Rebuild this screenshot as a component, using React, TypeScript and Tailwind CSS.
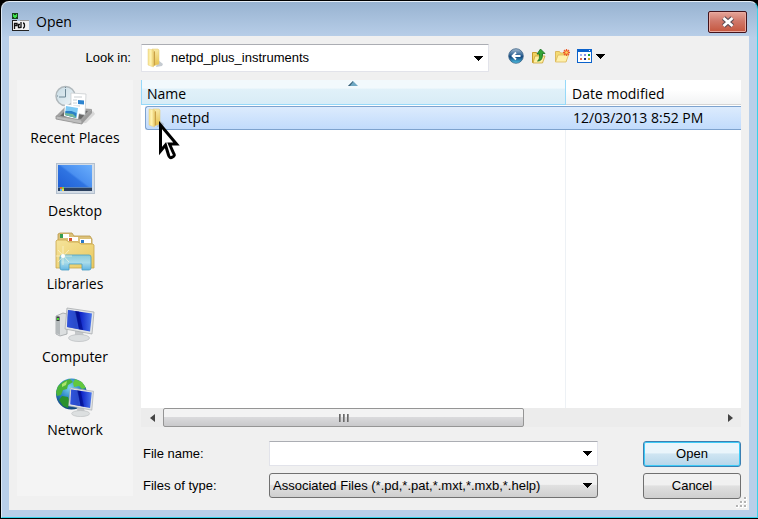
import type { ReactNode } from 'react';

function FolderIcon() {
  return (
    <svg width="20" height="20" viewBox="0 0 20 20" aria-hidden="true">
      <defs>
        <linearGradient id="folderFront" x1="0" x2="1" y1="0" y2="0">
          <stop offset="0" stopColor="#f6e28e" />
          <stop offset=".5" stopColor="#fff3b4" />
          <stop offset="1" stopColor="#e9cb66" />
        </linearGradient>
        <linearGradient id="folderBack" x1="0" x2="0" y1="0" y2="1">
          <stop offset="0" stopColor="#f8e9a6" />
          <stop offset="1" stopColor="#e6c04d" />
        </linearGradient>
      </defs>
      <path d="M13 12l5 4-1 2-6 1z" fill="#9fa8b2" opacity=".6" />
      <path d="M7 1h6l1 1v14l-6 2z" fill="url(#folderBack)" stroke="#e2c873" strokeWidth=".5" />
      <path d="M8.500 4L10 3v14l-1.500 1z" fill="#c9a046" />
      <path d="M3 1l5.500 1v17L3 17z" fill="url(#folderFront)" stroke="#e6cd80" strokeWidth=".5" />
    </svg>
  );
}

function AppIcon() {
  return (
    <svg width="18" height="19" viewBox="0 0 18 19" aria-hidden="true">
      <path d="M0 0h6v6H0z" fill="#17451c" />
      <path d="M1 1h1v1h2V1h1v3H4v1H2V4H1z" fill="#3ce04b" />
      <path d="M0 8h17v10H0z" fill="#f2f2f2" />
      <path d="M0 7h5v1H0zM0 17h17v1H0zM0 8h1v9H0z" fill="#222" />
      <path d="M8 7h9v1H8z" fill="#999" />
      <path d="M2.500 10v6M2 10.500h3v2H2M8 11.500H6.500v3H8.500M9 9v6M11 10c2 0 2 5 0 5" fill="none" stroke="#111" strokeWidth="1.300" />
    </svg>
  );
}

function RecentIcon() {
  return (
    <svg width="40" height="40" viewBox="0 0 40 40" aria-hidden="true">
      <defs>
        <linearGradient id="clockFace" x1="0" y1="0" x2="1" y2="1">
          <stop offset="0" stopColor="#c7dbe4" />
          <stop offset="1" stopColor="#eef4f7" />
        </linearGradient>
      </defs>
      <path d="M30 32l8-6 2 3-9 9-15 1z" fill="#bbb" opacity=".5" />
      <circle cx="10.500" cy="11" r="9.500" fill="url(#clockFace)" stroke="#b0b8bc" strokeWidth="1.500" />
      <path d="M10.500 4v8H4" fill="none" stroke="#6d8795" strokeWidth="1" />
      <path d="M10.500 2v1M2 11h1M10.500 19v1M18 11h1" stroke="#6d8795" />
      <path d="M1 31l9-9 27 2-9 11z" fill="#a2a2a2" />
      <path d="M5 31l7-7 21 2-7 8z" fill="#6a6a6a" />
      <path d="M16 8l15 1-1 21-14-3z" fill="#fff" stroke="#c4c8cc" strokeWidth=".7" />
      <path d="M19 12h8M18 15h4M18 18h4M18 21h7" stroke="#c9ced2" />
      <path d="M23 15l6 .5v4L23 19z" fill="#2d83cf" />
      <path d="M10 19l15 3-2 13-14-4z" fill="#fff" />
      <path d="M11 21l12 2-1.500 10L10 30z" fill="#7cc8f3" />
      <path d="M10.500 26l6 0 5 2-.5 5L10 30z" fill="#2a80c6" />
      <path d="M10 28l8 1 3 3v1l-11-3z" fill="#75b99a" />
      <path d="M1 31l26 4v4L1 34z" fill="#bdbdbd" stroke="#8c8c8c" strokeWidth=".8" />
      <path d="M27 35l10-11v4l-10 11z" fill="#9b9b9b" />
    </svg>
  );
}

function DesktopIcon() {
  return (
    <svg width="40" height="40" viewBox="0 0 40 40" aria-hidden="true">
      <defs>
        <linearGradient id="wallpaper" x1="0" y1="1" x2="1" y2="0">
          <stop offset="0" stopColor="#1d5bd2" />
          <stop offset=".5" stopColor="#2f74e2" />
          <stop offset=".55" stopColor="#4a8ff0" />
          <stop offset="1" stopColor="#6aaefc" />
        </linearGradient>
      </defs>
      <path d="M1 5h39v31H1z" fill="#b4c0ce" />
      <path d="M2 6h37v29H2z" fill="#d3dce6" />
      <path d="M3 7h34v26H3z" fill="url(#wallpaper)" />
      <path d="M3 30h34v3H3z" fill="#2b405f" />
      <path d="M3 29h34v1H3z" fill="#5d85b8" />
      <path d="M5 29h2v2H5z" fill="#e96a36" />
      <path d="M7 29h2v2H7z" fill="#84cf46" />
      <path d="M5 31h2v2H5z" fill="#55b6f2" />
      <path d="M7 31h2v2H7z" fill="#f7d443" />
    </svg>
  );
}

function LibrariesIcon() {
  return (
    <svg width="40" height="40" viewBox="0 0 40 40" aria-hidden="true">
      <defs>
        <linearGradient id="libraryBody" x1="0" y1="0" x2="1" y2="1">
          <stop offset="0" stopColor="#f5e39b" />
          <stop offset="1" stopColor="#e9c95f" />
        </linearGradient>
        <linearGradient id="libraryStand" x1="0" y1="0" x2="0" y2="1">
          <stop offset="0" stopColor="#8ccbd8" />
          <stop offset=".5" stopColor="#a9dcea" />
          <stop offset="1" stopColor="#62b5e2" />
        </linearGradient>
      </defs>
      <path d="M3 12V3l2-1h12l2 3h16l2 3v12z" fill="#dcc27a" stroke="#b99848" strokeWidth=".8" />
      <path d="M5 3h9v4H5z" fill="#fff" />
      <path d="M5 3h3v4H5z" fill="#369d50" />
      <path d="M13 6h10v4H13z" fill="#fff" />
      <path d="M14 7h3v3h-3z" fill="#d65031" />
      <path d="M25 8h11v4H25z" fill="#fff" />
      <path d="M26 9h3v3h-3z" fill="#2878c8" />
      <path d="M1 10l1-1h9l3 2h9l3 2h12l1 1v23H1z" fill="url(#libraryBody)" stroke="#c9a64b" strokeWidth=".8" />
      <path d="M5 37V26q0-2 2-2h27q2 0 2 2v11q0 2-2 2h-7v-6H14v6H7q-2 0-2-2z" fill="url(#libraryStand)" stroke="#4aa0c4" strokeWidth=".8" />
      <path d="M8 15v19M1 25h16M3 19l11 12M3 31l11-12" stroke="#fffce0" strokeWidth=".6" />
      <circle cx="8" cy="25" r="2" fill="#fff" />
    </svg>
  );
}

function Monitor() {
  return (
    <>
      <defs>
        <linearGradient id="monitorGlass" x1="0" y1="0" x2="1" y2="0">
          <stop offset="0" stopColor="#0f22c8" />
          <stop offset=".35" stopColor="#0410a0" />
          <stop offset=".5" stopColor="#0a1fc4" />
          <stop offset="1" stopColor="#4d79ee" />
        </linearGradient>
      </defs>
      <path d="M20 26l8 2 1 5h-9z" fill="#c5c8ca" />
      <ellipse cx="24" cy="34" rx="10.500" ry="3.500" fill="#dcdfe0" stroke="#b9bcbe" strokeWidth=".7" />
      <path d="M12 4l27 4-2 22-27-5z" fill="#e1e4e6" stroke="#a9adb0" strokeWidth=".8" />
      <path d="M13 6l24 3.500-2 18L12 23z" fill="url(#monitorGlass)" />
      <path d="M13 6l8 1.200 3 18L12 23z" fill="#4f86f2" opacity=".5" />
      <path d="M20 7l4 .6 4 18.400-4-.8z" fill="#020c80" opacity=".6" />
    </>
  );
}

function ComputerIcon() {
  return (
    <svg width="40" height="40" viewBox="0 0 40 40" aria-hidden="true">
      <path d="M1 12l7-3 4 1v20l-7 2-4-2z" fill="#dcdfe0" stroke="#9da1a3" strokeWidth=".8" />
      <path d="M1 12l4 1v18l-4-2z" fill="#b4b9bb" />
      <path d="M1.500 12.500h3V17h-3z" fill="#353a3c" />
      <path d="M2 14h2v2H2z" fill="#49d82e" />
      <Monitor />
    </svg>
  );
}

function NetworkIcon() {
  return (
    <svg width="40" height="40" viewBox="0 0 40 40" aria-hidden="true">
      <defs>
        <radialGradient id="ocean" cx=".45" cy=".3" r=".7">
          <stop offset="0" stopColor="#7fd6f2" />
          <stop offset=".5" stopColor="#2b83c6" />
          <stop offset="1" stopColor="#104378" />
        </radialGradient>
      </defs>
      <circle cx="16.500" cy="17" r="15.500" fill="url(#ocean)" />
      <path d="M3 9l6-5 6-2 3 3-5 3-1 4-4 1-2 5-4 1-1-4z" fill="#4bb43a" />
      <path d="M20 2l7 3 4 6-4 1-3-3-5 1-1-4z" fill="#62c83e" />
      <path d="M7 19l6 1 2 5-2 6-5-2-4-6z" fill="#2b912c" />
      <path d="M7 7l5-3-1 4-4 2z" fill="#abe56c" />
      <svg x="12" y="10" width="29" height="30" viewBox="9 3 32 35">
        <Monitor />
      </svg>
    </svg>
  );
}

function BackIcon() {
  return (
    <svg width="16" height="16" viewBox="0 0 16 16" aria-hidden="true">
      <defs>
        <linearGradient id="backBall" x1="0" y1="0" x2="0" y2="1">
          <stop offset="0" stopColor="#a8bdd2" />
          <stop offset=".45" stopColor="#2d6396" />
          <stop offset=".55" stopColor="#12457c" />
          <stop offset="1" stopColor="#4ec3e6" />
        </linearGradient>
      </defs>
      <circle cx="8" cy="8" r="7.300" fill="url(#backBall)" stroke="#3e6387" strokeWidth=".8" />
      <path d="M12.500 8H5M8 4.500L4.500 8 8 11.500" fill="none" stroke="#fff" strokeWidth="1.800" />
    </svg>
  );
}

function UpIcon() {
  return (
    <svg width="16" height="16" viewBox="0 0 16 16" aria-hidden="true">
      <path d="M1.500 14.500v-10h4l1 1.500h5v8z" fill="#f0d262" stroke="#c69b2b" />
      <path d="M2 15l2-7h10l-2.500 7z" fill="#fff0a0" stroke="#c69b2b" strokeWidth=".7" />
      <path d="M6.500 13c2-1 2-3 2-7H6l3.500-5L14 5.500h-2.500c0 5-1 7.500-5 7.500z" fill="#33a636" stroke="#176f22" strokeWidth=".8" />
    </svg>
  );
}

function NewFolderIcon() {
  return (
    <svg width="16" height="16" viewBox="0 0 16 16" aria-hidden="true">
      <path d="M1.500 13.500v-10h4l1 1.500h6v8z" fill="#f5db72" stroke="#dcb95e" />
      <path d="M1.500 14l2.500-7h10.500L12 14z" fill="#fff0aa" stroke="#dcb95e" strokeWidth=".8" />
      <path d="M12.500 1v7M9 4.500h7M10 2l5 5M10 7l5-5" stroke="#ed5b26" strokeWidth="1.300" />
      <circle cx="12.500" cy="4.500" r="1.300" fill="#ffd65e" />
    </svg>
  );
}

function ViewsIcon() {
  return (
    <svg width="15" height="14" viewBox="0 0 15 14" aria-hidden="true">
      <path d="M0 0h15v14H0z" fill="#0a62cc" />
      <path d="M1 3h13v10H1z" fill="#fff" />
      <path d="M12 1h1v1h-1z" fill="#fff" />
      <path d="M3 5h2v2H3z" fill="#a6b1f0" />
      <path d="M7 5h2v2H7z" fill="#8490e8" />
      <path d="M11 5h2v2h-2z" fill="#1aa038" />
      <path d="M3 9h2v2H3z" fill="#e56f4b" />
      <path d="M7 9h2v2H7z" fill="#1b2b87" />
      <path d="M11 9h2v2h-2z" fill="#d2a727" />
    </svg>
  );
}

function Arrow({ className = '' }: { className?: string }) {
  return (
    <svg className={className} width="9" height="5" viewBox="0 0 9 5" shapeRendering="crispEdges" aria-hidden="true">
      <path d="M0 0h9L4.500 5z" fill="#000" />
    </svg>
  );
}

function Pointer() {
  return (
    <svg width="23" height="40" viewBox="0 0 23 40" aria-hidden="true">
      <path
        d="M2.500 4v26l5-6 3 10q1 4 4 2 3-1 1-4l-4-9h7z"
        fill="#fff"
        stroke="#000"
        strokeWidth="3"
      />
    </svg>
  );
}

function ResizeGrip() {
  return (
    <svg className="absolute right-0.5 bottom-0.5" width="11" height="11" viewBox="0 0 11 11" aria-hidden="true">
      <path d="M8 0h3v3H8zM4 4h3v3H4zM8 4h3v3H8zM0 8h3v3H0zM4 8h3v3H4zM8 8h3v3H8z" fill="#fff" />
      <path d="M8 0h2v2H8zM4 4h2v2H4zM8 4h2v2H8zM0 8h2v2H0zM4 8h2v2H4zM8 8h2v2H8z" fill="#b3b3b3" />
    </svg>
  );
}

const places: { name: string; icon: ReactNode }[] = [
  { name: 'Recent Places', icon: <RecentIcon /> },
  { name: 'Desktop', icon: <DesktopIcon /> },
  { name: 'Libraries', icon: <LibrariesIcon /> },
  { name: 'Computer', icon: <ComputerIcon /> },
  { name: 'Network', icon: <NetworkIcon /> },
];

function TitleBar() {
  return (
    <header className="flex h-[34px] items-start justify-between pr-[2px] pl-[3px]">
      <div className="flex items-center gap-1.5 pt-[10px]">
        <AppIcon />
        <h1 className="font-['Open_Sans',sans-serif] text-sm leading-5">Open</h1>
      </div>
      <button
        aria-label="Close"
        className="mt-[9px] flex h-[22px] w-[39px] items-center justify-center rounded-[2px] border border-[#43131b] bg-linear-to-b from-[#e5a59a] via-[#d0786a] via-45% to-[#c5553c] shadow-[inset_0_0_0_1px_#e9aaa0]"
      >
        <svg width="14" height="12" viewBox="0 0 14 12" aria-hidden="true">
          <path d="M2.500 2l9 8M11.500 2l-9 8" stroke="#5b4c55" strokeWidth="5" />
          <path d="M2.500 2l9 8M11.500 2l-9 8" stroke="#fff" strokeWidth="2.800" />
        </svg>
      </button>
    </header>
  );
}

function PlacesBar() {
  return (
    <nav className="mt-2 mb-[14px] w-[116px] shrink-0 bg-[#f4f4f4]">
      <ul>
        {places.map((place) => (
          <li key={place.name}>
            <a href="#" className="flex h-[73px] flex-col items-center pt-[5px] font-['Open_Sans',sans-serif] text-sm leading-5">
              {place.icon}
              <span className="mt-[3px]">{place.name}</span>
            </a>
          </li>
        ))}
      </ul>
    </nav>
  );
}

function Toolbar() {
  return (
    <div className="flex items-center gap-[7px] pb-1">
      <button aria-label="Back"><BackIcon /></button>
      <button aria-label="Up one level"><UpIcon /></button>
      <button aria-label="New folder"><NewFolderIcon /></button>
      <button aria-label="Views" className="flex items-center gap-1">
        <ViewsIcon />
        <Arrow />
      </button>
    </div>
  );
}

function FileList() {
  return (
    <div className="flex min-h-0 flex-1 flex-col bg-white font-['Open_Sans',sans-serif] text-sm">
      <table className="w-full table-fixed border-separate border-spacing-0 text-left">
        <thead>
          <tr className="h-[25px]">
            <th className="relative w-[425px] border-r border-b border-l border-[#96d9f9] bg-linear-to-b from-[#f2f9fc] from-35% via-[#e1f1f9] via-36% to-[#d8ecf6] p-0 pt-[3px] pl-[5px] font-normal">
              Name
              <svg className="absolute top-px left-[206px]" width="10" height="5" viewBox="0 0 10 5" aria-hidden="true">
                <path d="M0 5l5-5 5 5z" fill="#6fa8c3" />
                <path d="M0 5l5-5v1L2 5z" fill="#3c5e72" />
              </svg>
            </th>
            <th className="border-b border-[#d5d5d5] bg-linear-to-b from-white from-40% to-[#f2f3f4] p-0 pt-[3px] pl-[6px] font-normal">
              Date modified
            </th>
          </tr>
        </thead>
        <tbody>
          <tr>
            <td className="p-0 pt-px pl-1">
              <div className="relative flex h-6 items-center gap-[5px] rounded-l-[3px] border-y border-l border-[#7da2ce] bg-linear-to-b from-[#dcebfd] to-[#c1dbfc]">
                <FolderIcon />
                netpd
                <span className="absolute top-[14px] left-[12px]"><Pointer /></span>
              </div>
            </td>
            <td className="p-0 pt-px">
              <div className="flex h-6 items-center border-y border-[#7da2ce] bg-linear-to-b from-[#dcebfd] to-[#c1dbfc] pl-[7px]">
                12/03/2013 8:52 PM
              </div>
            </td>
          </tr>
        </tbody>
      </table>
      <div className="w-[425px] flex-1 border-r border-[#edf1f5]" />
    </div>
  );
}

function ScrollBar() {
  return (
    <div className="flex h-[19px] items-center justify-between bg-[#ececec]">
      <button aria-label="Scroll left" className="flex w-[22px] justify-center">
        <svg width="5" height="8" viewBox="0 0 5 8" aria-hidden="true"><path d="M5 0v8L0 4z" fill="#444" /></svg>
      </button>
      <div className="flex-1">
        <div className="flex h-[19px] w-[65%] items-center justify-center gap-[2px] rounded-[2px] border border-[#959595] bg-linear-to-b from-[#f3f3f3] from-45% via-[#dadadc] via-50% to-[#c9c9cb]">
          <i className="h-2 w-[2px] bg-linear-to-r from-[#555] to-[#aaa]" />
          <i className="h-2 w-[2px] bg-linear-to-r from-[#555] to-[#aaa]" />
          <i className="h-2 w-[2px] bg-linear-to-r from-[#555] to-[#aaa]" />
        </div>
      </div>
      <button aria-label="Scroll right" className="flex w-[22px] justify-center">
        <svg width="5" height="8" viewBox="0 0 5 8" aria-hidden="true"><path d="M0 0v8l5-4z" fill="#444" /></svg>
      </button>
    </div>
  );
}

export default function App() {
  return (
    <div className="flex min-h-screen flex-col border-t border-b border-l border-black bg-black font-['Liberation_Sans',sans-serif] text-[13px] text-black">
      <div className="flex flex-1 flex-col rounded-t-lg border border-t-[#e6eef7] border-r-[#35d3ea] border-b-[#35d3ea] border-l-[#dde9f5] bg-[linear-gradient(#98b3d1,#b9cfe9_36px)] pr-2 pb-[7px] pl-[7px]">
        <TitleBar />
        <main className="relative flex flex-1 flex-col bg-[#f0f0f0] px-2">
          <div className="flex items-center pt-2">
            <label htmlFor="look" className="w-[114px] text-right">Look in:</label>
            <div className="relative ml-[10px] w-[348px]">
              <span className="pointer-events-none absolute top-1 left-1"><FolderIcon /></span>
              <select id="look" className="block h-7 w-full appearance-none rounded-[1px] border border-[#e2e3ea] border-t-[#abadb3] bg-white pl-[29px]">
                <option>netpd_plus_instruments</option>
              </select>
              <Arrow className="pointer-events-none absolute top-3 right-[6px]" />
            </div>
            <div className="ml-[19px]"><Toolbar /></div>
          </div>
          <div className="flex flex-1 gap-2">
            <PlacesBar />
            <div className="flex min-w-0 flex-1 flex-col pt-2">
              <FileList />
              <ScrollBar />
              <form className="grid grid-cols-[128px_1fr_98px] gap-y-[6px] pt-[14px] pb-[11px]">
                <label htmlFor="file" className="self-center pl-[2px]">File name:</label>
                <div className="relative mr-[45px]">
                  <input id="file" className="block h-[25px] w-full border border-[#e2e3ea] border-t-[#abadb3] bg-white px-1" />
                  <Arrow className="pointer-events-none absolute top-[10px] right-[6px]" />
                </div>
                <button type="button" className="h-[26px] rounded-[3px] border border-[#3c7fb1] bg-linear-to-b from-[#eaf5fb] from-45% via-[#cfe5f2] via-50% to-[#b5d6ea] shadow-[inset_0_0_0_1px_#3dcbf7]">
                  Open
                </button>
                <label htmlFor="kind" className="self-center pl-[2px]">Files of type:</label>
                <div className="relative mr-[45px]">
                  <select id="kind" className="block h-[25px] w-full appearance-none rounded-[3px] border border-[#707070] bg-linear-to-b from-[#f1f1f1] from-45% via-[#e0e0e0] via-50% to-[#cfcfcf] pl-[3px]">
                    <option>Associated Files (*.pd,*.pat,*.mxt,*.mxb,*.help)</option>
                  </select>
                  <Arrow className="pointer-events-none absolute top-[10px] right-[6px]" />
                </div>
                <button type="button" className="h-[26px] rounded-[3px] border border-[#707070] bg-linear-to-b from-[#f1f1f1] from-45% via-[#e0e0e0] via-50% to-[#cfcfcf]">
                  Cancel
                </button>
              </form>
            </div>
          </div>
          <ResizeGrip />
        </main>
      </div>
    </div>
  );
}
